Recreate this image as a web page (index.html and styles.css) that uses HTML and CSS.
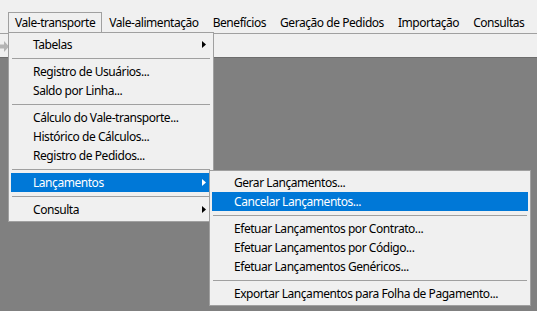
FILE: index.html
```html
<!DOCTYPE html>
<html lang="pt-BR">
<head>
    <meta charset="utf-8">
    <title>Vale-transporte</title>
    <link rel="stylesheet" href="styles.css">
</head>
<body>
    <div class="app">
        <div class="top-strip"></div>

        <nav class="menubar">
            <div class="menubar-item open">
                Vale-transporte
                <ul class="dropdown">
                    <li class="item has-sub">Tabelas
                        <svg class="arrow" width="4" height="7" viewBox="0 0 4 7"><path d="M0 0L4 3.5L0 7Z"/></svg>
                    </li>
                    <li class="sep"></li>
                    <li class="item">Registro de Usuários...</li>
                    <li class="item">Saldo por Linha...</li>
                    <li class="sep"></li>
                    <li class="item">Cálculo do Vale-transporte...</li>
                    <li class="item">Histórico de Cálculos...</li>
                    <li class="item">Registro de Pedidos...</li>
                    <li class="sep"></li>
                    <li class="item has-sub active">Lançamentos
                        <svg class="arrow" width="4" height="7" viewBox="0 0 4 7"><path d="M0 0L4 3.5L0 7Z"/></svg>
                        <ul class="dropdown submenu">
                            <li class="item">Gerar Lançamentos...</li>
                            <li class="item active">Cancelar Lançamentos...</li>
                            <li class="sep"></li>
                            <li class="item">Efetuar Lançamentos por Contrato...</li>
                            <li class="item">Efetuar Lançamentos por Código...</li>
                            <li class="item">Efetuar Lançamentos Genéricos...</li>
                            <li class="sep"></li>
                            <li class="item">Exportar Lançamentos para Folha de Pagamento...</li>
                        </ul>
                    </li>
                    <li class="sep"></li>
                    <li class="item has-sub">Consulta
                        <svg class="arrow" width="4" height="7" viewBox="0 0 4 7"><path d="M0 0L4 3.5L0 7Z"/></svg>
                    </li>
                </ul>
            </div>
            <div class="menubar-item">Vale-alimentação</div>
            <div class="menubar-item">Benefícios</div>
            <div class="menubar-item">Geração de Pedidos</div>
            <div class="menubar-item">Importação</div>
            <div class="menubar-item">Consultas</div>
        </nav>

        <div class="toolbar">
            <svg class="tool-icon" width="10" height="11" viewBox="0 0 10 11">
                <path d="M0 3.5H4V0L9 5.5L4 11V7.5H0Z"/>
            </svg>
        </div>

        <div class="workspace"></div>
    </div>
</body>
</html>
```

FILE: styles.css
```css
* {
    box-sizing: border-box;
}

body {
    margin: 0;
    font: 12px/1 "Noto Sans", sans-serif;
    letter-spacing: -0.45px;
    color: #000;
    background: #808080;
}

ul {
    list-style: none;
    margin: 0;
    padding: 0;
}

.app {
    height: 311px;
    display: flex;
    flex-direction: column;
}

.top-strip {
    height: 12px;
    background: #f0f0f0;
}

/* menu bar */
.menubar {
    display: flex;
    height: 22px;
    padding-left: 8px;
    background: #f0f0f0;
    border-bottom: 1px solid #a0a0a0;
}

.menubar-item {
    position: relative;
    height: 21px;
    padding: 0 6px;
    line-height: 19px;
    white-space: nowrap;
    border: 1px solid transparent;
    border-bottom: none;
}

.menubar-item.open {
    border-color: #a0a0a0;
}

/* dropdowns */
.dropdown {
    position: absolute;
    left: -1px;
    top: 19px;
    z-index: 5;
    width: 206px;
    padding: 2px;
    background: #f0f0f0;
    border: 1px solid #a0a0a0;
}

.item {
    position: relative;
    height: 19px;
    padding-left: 22px;
    line-height: 19px;
    white-space: nowrap;
}

.item.active {
    background: #0078d7;
    color: #fff;
}

.sep {
    height: 1px;
    margin: 4px 1px 3px;
    background: #a0a0a0;
}

.arrow {
    position: absolute;
    right: 5px;
    top: 6px;
    fill: #000;
}

.item.active .arrow {
    fill: #fff;
}

.submenu {
    left: 198px;
    top: -3px;
    width: 322px;
    color: #000;
}

/* toolbar */
.toolbar {
    height: 24px;
    background: #f0f0f0;
    border-bottom: 1px solid #6d6d6d;
}

.tool-icon {
    display: block;
    margin-top: 7px;
    fill: #b4b4b4;
}

.workspace {
    flex: 1;
    background: #808080;
}
```
